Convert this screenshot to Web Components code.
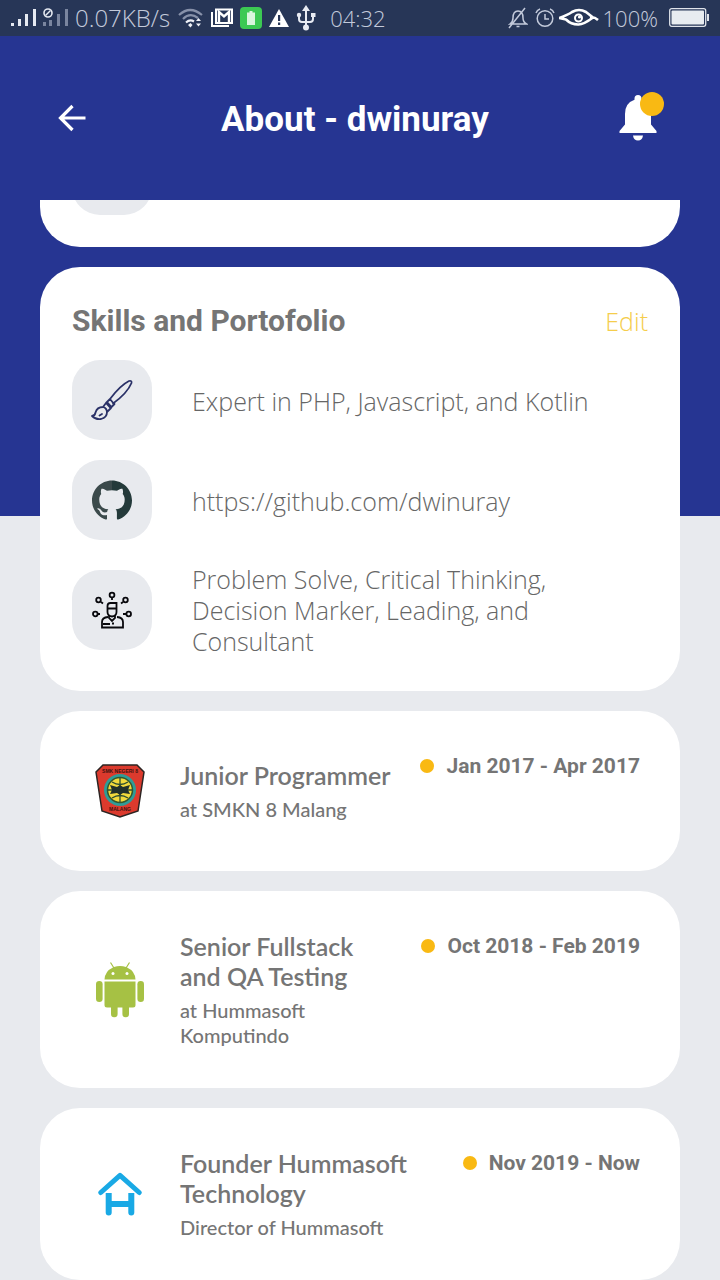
<!DOCTYPE html>
<html lang="en">
<head>
<meta charset="utf-8">
<meta name="viewport" content="width=device-width, initial-scale=1">
<title>About - dwinuray</title>
<style>
  html, body { margin: 0; }
  body {
    --blue: #263592;
    --grey: #e8eaee;
    --amber: #f9b913;
    --ink: #757575;
    --thin: "Open Sans", "Noto Sans", sans-serif;
    --head: Roboto, "Liberation Sans", sans-serif;
    --soft: Lato, "Open Sans", sans-serif;
    background: var(--grey);
    font-family: var(--head);
    color: var(--ink);
  }
</style>
</head>
<body>
<about-page>
  <status-bar slot="top"></status-bar>
  <app-header slot="top">About - dwinuray</app-header>

  <info-card peek></info-card>

  <info-card heading="Skills and Portofolio" action="Edit">
    <skill-row icon="brush">Expert in PHP, Javascript, and Kotlin</skill-row>
    <skill-row icon="github" link="https://github.com/dwinuray">https://github.com/dwinuray</skill-row>
    <skill-row icon="person">Problem Solve, Critical Thinking, Decision Marker, Leading, and Consultant</skill-row>
  </info-card>

  <job-card icon="shield">
    <span slot="title">Junior Programmer</span>
    <span slot="place">at SMKN 8 Malang</span>
    <span slot="date">Jan 2017 - Apr 2017</span>
  </job-card>
  <job-card icon="android">
    <span slot="title">Senior Fullstack and QA Testing</span>
    <span slot="place">at Hummasoft Komputindo</span>
    <span slot="date">Oct 2018 - Feb 2019</span>
  </job-card>
  <job-card icon="house">
    <span slot="title">Founder Hummasoft Technology</span>
    <span slot="place">Director of Hummasoft</span>
    <span slot="date">Nov 2019 - Now</span>
  </job-card>
</about-page>

<script>
const ICONS = {
  signal: [26, 20, `<g fill="#e6eaf2"><rect y="15" width="3" height="3"/><rect x="7" y="11" width="3" height="7"/><rect x="14" y="6" width="3" height="12"/><rect x="22" y="1" width="3" height="17"/></g>`],
  nosignal: [26, 20, `<g fill="#7a859f"><rect y="14" width="3" height="4"/><rect x="6" y="12" width="3" height="6"/><rect x="14" y="6" width="3" height="12"/><rect x="22" y="1" width="3" height="17"/></g><circle cx="5" cy="5" r="4" fill="none" stroke="#e6eaf2" stroke-width="1.6"/><path d="M2.500 7.500 7.500 2.500" stroke="#e6eaf2" stroke-width="1.500"/>`],
  wifi: [26, 22, `<g fill="none" stroke-width="2.200"><path d="M1 8Q12-2 24 8" stroke="#8791a9"/><path d="M5 12Q12 5 20 11" stroke="#8791a9"/><path d="M8 15.500Q12 12 16 14.500" stroke="#eef1f7"/></g><path d="m10 18 2.500-2 2 2-2 2.500z" fill="#eef1f7"/><path d="m18 14 2.500-3 2.500 3zM18 16.500l2.500 3 2.500-3z" fill="#eef1f7"/>`],
  mail: [22, 20, `<path d="M1 4v14h17" fill="none" stroke="#fff" stroke-width="2"/><rect x="5" y="1.500" width="16" height="13.500" fill="none" stroke="#fff" stroke-width="2"/><path d="M8 15V4l5 4.500L18 4v11" fill="none" stroke="#fff" stroke-width="2.400"/>`],
  charge: [22, 22, `<rect width="22" height="22" rx="4" fill="#3cc953"/><path d="M7 5.500h2.500V4h3v1.500H15V18H7z" fill="#d9f6dd"/>`],
  warn: [20, 20, `<path d="m10 1 10 18H0z" fill="#fff"/><path d="M9 7h2.200v6H9zM9 14.500h2.200V17H9z" fill="#273657"/>`],
  usb: [20, 26, `<g fill="none" stroke="#e8ebf3" stroke-width="2"><path d="M10 4v18M3 9v5q0 3 3 3h8q3 0 3-3V9"/></g><g fill="#e8ebf3"><path d="m10 0 4 6H6z"/><circle cx="10" cy="22.500" r="3"/><circle cx="3" cy="10" r="2.200"/><path d="M15 8h4.500v4H15z"/></g>`],
  mute: [20, 22, `<g fill="none" stroke="#c3cadb" stroke-width="1.500"><path d="M2 17q3-2 3-6 0-7 5-7t5 7q0 4 3.500 6zM1 21 17 1M8.500 19.500h3"/></g>`],
  clock: [20, 20, `<g fill="none" stroke="#c3cadb" stroke-width="1.500"><circle cx="10" cy="10.500" r="7.800"/><path d="M10 6v5h4M1 5q1-3 4-4M19 5q-1-3-4-4"/></g>`],
  eye: [40, 20, `<path d="M0 10Q9 7 13 4q7-4 14 0l7 5.500Q24 17 19 16.500 12 16.500 7 11.500zM31 9.500q4-1 8 2.500" fill="none" stroke="#fff" stroke-width="2.600" stroke-linejoin="round"/><circle cx="19.500" cy="10" r="3.500" fill="none" stroke="#fff" stroke-width="2"/><circle cx="20.500" cy="9" r="1.600" fill="#fff"/>`],
  battery: [40, 20, `<rect x=".7" y=".7" width="36" height="17.600" rx="2" fill="none" stroke="#dfe3ea" stroke-width="1.300"/><rect x="2.500" y="2.500" width="32.500" height="14" rx="1" fill="#e8ecf0"/><rect x="38" y="6" width="2" height="7" fill="#dfe3ea"/>`],
  back: [28, 28, `<path d="M27.500 14H3M14.500 2 2.500 14l12 12" fill="none" stroke="#fff" stroke-width="3.200"/>`],
  bell: [38, 46, `<path d="M19 0q3.500 0 3.500 3.500v1.300Q32 8 32 19v10.500l5.500 6.500V38H.5v-2L6 29.500V19Q6 8 15.500 4.800V3.500Q15.500 0 19 0zM14 40.500h10q-.7 5-5 5t-5-5z" fill="#fff"/>`],
  brush: [42, 42, `<g fill="none" stroke="#2b3268" stroke-width="1.800" stroke-linejoin="round" stroke-linecap="round"><path d="M19 20C25 12 32 5 38 2q3-.8 2.500 2C38 10 31 18 22 24.500M19 20l4 5M19 20l-4 4 4.500 5 4-4M16 23l4.500 5M15 24l-3 4q4 1 4 5l4-4M12 28q-6 0-7.500 5.500Q4 37 1 37q4 4 9 3 6-1.500 6-7-.5-4-4-5z"/><path d="M8.500 36.500 11 35"/></g>`],
  github: [40, 40, `<svg viewBox="0 0 24 24" width="40" height="40"><defs><linearGradient id="g"><stop offset=".5" stop-color="#3b4a4b"/><stop offset=".5" stop-color="#243a3a"/></linearGradient></defs><path fill="url(#g)" d="M12 .297c-6.630 0-12 5.373-12 12 0 5.303 3.438 9.800 8.205 11.385.6.113.82-.258.82-.577 0-.285-.01-1.040-.015-2.040-3.338.724-4.042-1.610-4.042-1.610C4.422 18.070 3.633 17.700 3.633 17.700c-1.087-.744.084-.729.084-.729 1.205.084 1.838 1.236 1.838 1.236 1.070 1.835 2.809 1.305 3.495.998.108-.776.417-1.305.76-1.605-2.665-.3-5.466-1.332-5.466-5.930 0-1.310.465-2.380 1.235-3.220-.135-.303-.54-1.523.105-3.176 0 0 1.005-.322 3.300 1.230.96-.267 1.980-.399 3-.405 1.020.006 2.040.138 3 .405 2.280-1.552 3.285-1.230 3.285-1.230.645 1.653.24 2.873.12 3.176.765.84 1.230 1.910 1.230 3.220 0 4.610-2.805 5.625-5.475 5.920.42.36.81 1.096.81 2.220 0 1.606-.015 2.896-.015 3.286 0 .315.21.69.825.57C20.565 22.092 24 17.592 24 12.297c0-6.627-5.373-12-12-12"/></svg>`],
  person: [40, 40, `<g fill="none" stroke="#08080c" stroke-width="1.800"><circle cx="20" cy="5" r="2.400"/><path d="M20 8v2M9 12l2 1.500M31 12l-2 1.500M6 24h2M34 24h-3"/><circle cx="6.500" cy="10" r="2.300"/><circle cx="33.500" cy="10" r="2.300"/><circle cx="3.300" cy="24" r="2.300"/><circle cx="36.700" cy="24" r="2.300"/><path d="M15.500 22v-6q0-3 3-3h6v9q0 4-4.500 4.500-4.500-.5-4.500-4.500zM15.500 18.500h9M17 26v2l3 3 3-3v-2M16 27q-6 .5-6 5v5.500h21V32q0-4.500-6-5M11 34h7M20 33.500h2"/></g>`],
  shield: [50, 54, `<path d="M8 1h34l7 7-6 39-18 6-18-6L1 8z" fill="#dc3a2d" stroke="#2b2422" stroke-width="1.500"/><circle cx="25" cy="26" r="16" fill="#2f9c97"/><circle cx="25" cy="26" r="12.500" fill="#f2da3c" stroke="#37562b" stroke-width="1.500"/><path d="M25 14v24M13 26h24M17 18q8 5 16 0M17 34q8-5 16 0" fill="none" stroke="#2e4e31" stroke-width="1.300"/><path d="m15 21 7 2 3-2 3 2 7-2-2 5 2 4-7-1-3 2-3-2-7 1 2-4z" fill="#22312b"/><g fill="#41120f" font-family="Liberation Sans" font-weight="700" font-size="5" text-anchor="middle"><text x="25" y="9">SMK NEGERI 8</text><text x="25" y="47">MALANG</text></g>`],
  android: [48, 56, `<g fill="#a6c144"><path d="M8.500 17.500Q9 9 17 5.500L14 .8l1-.6 3 4.800q6-2 12 0l3-4.800 1 .6-3 4.700Q39 9 39.500 17.500z"/><path d="M8.500 19.500h31V43q0 2.500-2.500 2.500h-4V52a3.300 3.300 0 0 1-6.600 0v-6.500h-4.800V52a3.300 3.300 0 0 1-6.600 0v-6.500H11q-2.500 0-2.500-2.500z"/><rect y="19" width="6.600" height="21" rx="3.300"/><rect x="41.400" y="19" width="6.600" height="21" rx="3.300"/></g><circle cx="17" cy="11.500" r="1.500" fill="#fff"/><circle cx="31" cy="11.500" r="1.500" fill="#fff"/>`],
  house: [44, 44, `<path d="M2.800 20.500 22 3.300l19.200 17.200" fill="none" stroke="#19a9e5" stroke-width="5" stroke-linecap="round" stroke-linejoin="round"/><path d="M7.700 21h6v8h16.600v-8h6v19.500a3 3 0 0 1-6 0V35H13.700v5.500a3 3 0 0 1-6 0z" fill="#19a9e5"/>`]
};

class UiBase extends HTMLElement {
  connectedCallback() {
    if (this.shadowRoot) return;
    this.attachShadow({ mode: "open" }).innerHTML =
      `<style>*{box-sizing:border-box}${this.css()}</style>${this.html()}`;
  }
}
const define = (name, css, html) => customElements.define(name, class extends UiBase {
  css() { return css; }
  html() { return html(this); }
});

define("ui-icon", `:host{display:block;flex:none}svg{display:block}`, el => {
  const [w, h, body] = ICONS[el.getAttribute("name")];
  return `<svg width="${w}" height="${h}" viewBox="0 0 ${w} ${h}" aria-hidden="true">${body}</svg>`;
});

define("about-page", `
  :host{display:block;min-height:100vh;background:linear-gradient(var(--blue) 516px,var(--grey) 516px)}
  main{display:flex;flex-direction:column;gap:20px;padding:0 40px}
`, () => `<slot name="top"></slot><main><slot></slot></main>`);

define("status-bar", `
  :host{display:flex;justify-content:space-between;align-items:center;height:36px;padding:0 11px;background:#273657;color:#c3cadb;font:300 22px/36px var(--thin);white-space:nowrap}
  div{display:flex;align-items:center;gap:6px}
  .speed{font-size:24px;padding-right:2px}
  .icons{gap:7px}
  .time{padding-left:8px}
  .right{gap:4px}
  .right ui-icon:first-child{padding-right:3px}
  .right ui-icon:last-child{padding-left:7px}
`, () => `
  <div><ui-icon name="signal"></ui-icon><ui-icon name="nosignal"></ui-icon><span class="speed">0.07KB/s</span>
    <div class="icons"><ui-icon name="wifi"></ui-icon><ui-icon name="mail"></ui-icon><ui-icon name="charge"></ui-icon><ui-icon name="warn"></ui-icon><ui-icon name="usb"></ui-icon></div>
    <span class="time">04:32</span></div>
  <div class="right"><ui-icon name="mute"></ui-icon><ui-icon name="clock"></ui-icon><ui-icon name="eye"></ui-icon><span>100%</span><ui-icon name="battery"></ui-icon></div>`);

define("app-header", `
  :host{display:grid;grid-template-columns:48px 1fr 48px;align-items:center;height:164px;padding:0 58px 0 48px}
  h1{margin:0;padding-top:4px;font:700 35px/48px var(--head);color:#fff;text-align:center}
  button{display:grid;place-items:center;width:48px;height:48px;margin:0;padding:0;border:0;background:none;position:relative}
  .bell::after{content:"";position:absolute;top:-2px;right:-2px;width:24px;height:24px;border-radius:50%;background:var(--amber)}
`, () => `
  <button aria-label="Back"><ui-icon name="back"></ui-icon></button>
  <h1><slot></slot></h1>
  <button class="bell" aria-label="Notifications"><ui-icon name="bell"></ui-icon></button>`);

define("icon-tile", `
  :host{display:grid;place-items:center;flex:none;width:80px;height:80px;border-radius:28px;background:var(--grey)}
`, el => el.hasAttribute("icon") ? `<ui-icon name="${el.getAttribute("icon")}"></ui-icon>` : "");

define("info-card", `
  :host{display:block;background:#fff;border-radius:40px;padding:32px;overflow:hidden}
  :host([peek]){padding-top:0;border-radius:0 0 40px 40px}
  :host([peek]) icon-tile{margin-top:-65px}
  header{display:flex;justify-content:space-between;align-items:center;height:44px;margin-bottom:17px}
  h2{margin:0;font:700 30px/44px var(--head)}
  button{margin:0;padding:0;border:0;background:none;font:300 25px/44px var(--thin);color:#f5cd4c}
  .rows{display:flex;flex-direction:column;gap:20px}
`, el => el.hasAttribute("peek") ? `<icon-tile></icon-tile>` : `
  <header><h2>${el.getAttribute("heading")}</h2><button>${el.getAttribute("action")}</button></header>
  <div class="rows"><slot></slot></div>`);

define("skill-row", `
  :host{display:flex;align-items:center;gap:40px}
  p{margin:0;padding:4px 24px 2px 0;font:300 25px/31px var(--thin);color:#666}
  a{color:inherit;text-decoration:none}
`, el => {
  const link = el.getAttribute("link");
  return `<icon-tile icon="${el.getAttribute("icon")}"></icon-tile><p>${link ? `<a href="${link}"><slot></slot></a>` : `<slot></slot>`}</p>`;
});

define("job-card", `
  :host{display:flex;align-items:center;gap:20px;background:#fff;border-radius:40px;padding:40px}
  .logo{display:grid;place-items:center;flex:none;width:80px;height:80px}
  .text{flex:1;min-width:0}
  h3{margin:0 0 7px;font:600 25px/30px var(--soft)}
  p{margin:0;font:500 20px/25px var(--soft)}
  time{display:flex;align-items:center;align-self:flex-start;gap:12px;padding-left:6px;font:700 21px/30px var(--head);white-space:nowrap}
  time::before{content:"";width:14px;height:14px;border-radius:50%;background:var(--amber)}
`, el => `
  <div class="logo"><ui-icon name="${el.getAttribute("icon")}"></ui-icon></div>
  <div class="text"><h3><slot name="title"></slot></h3><p><slot name="place"></slot></p></div>
  <time><slot name="date"></slot></time>`);
</script>
</body>
</html>
